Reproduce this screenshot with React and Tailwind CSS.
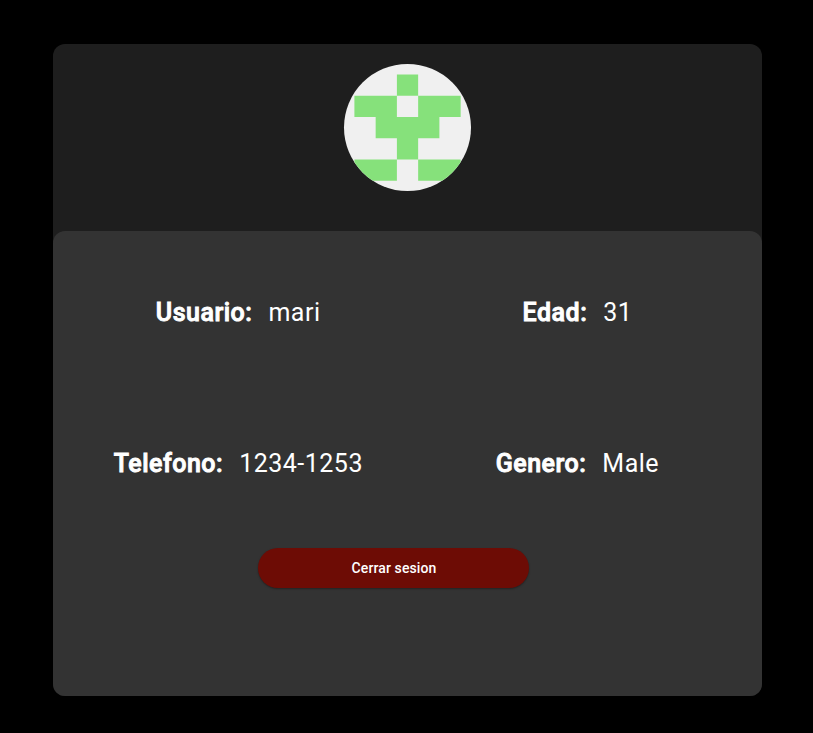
function Avatar() {
  return (
    <svg className="size-[127px] rounded-full bg-[#f0f0f0]" viewBox="0 0 127 127" fill="#86e17b">
      <path d="M52.9 10.4H74.15V31.65H116.65V52.9H95.4V74.15H74.15V95.4H52.9V74.15H31.65V52.9H10.4V31.65H52.9ZM52.9 31.65V52.9H74.15V31.65Z" fillRule="evenodd" />
      <path d="M10.4 95.4H52.9V116.65H10.4ZM74.15 95.4H116.65V116.65H74.15Z" />
    </svg>
  );
}

function Field({ label, value, className }) {
  return (
    <div className={`flex items-baseline whitespace-nowrap text-[25px] leading-[34px] tracking-[0.5px] ${className}`}>
      <span className="font-medium [-webkit-text-stroke:0.9px_white]">{label}</span>
      <span className="ml-4">{value}</span>
    </div>
  );
}

export default function App() {
  return (
    <main className="h-[733px] w-[813px] bg-black pl-[53px] pt-11 text-white font-[Roboto,sans-serif]">
      <section className="h-[652px] w-[709px] rounded-xl bg-[#1e1e1e]">
        <header className="flex h-[187px] justify-center pt-5">
          <Avatar />
        </header>
        <div className="h-[465px] rounded-xl bg-[#333333] pt-[65px]">
          <div className="flex">
            <Field label="Usuario:" value="mari" className="ml-[102.8px] w-[366.8px]" />
            <Field label="Edad:" value="31" className="" />
          </div>
          <div className="mt-[117px] flex">
            <Field label="Telefono:" value="1234-1253" className="ml-[60.7px] w-[382.1px]" />
            <Field label="Genero:" value="Male" className="" />
          </div>
          <button className="ml-[205px] mt-[67px] h-10 w-[271px] rounded-full bg-[#6d0c05] pl-px text-sm font-medium tracking-[0.1px] shadow-[0_1px_2px_rgba(0,0,0,0.35)]">
            Cerrar sesion
          </button>
        </div>
      </section>
    </main>
  );
}
